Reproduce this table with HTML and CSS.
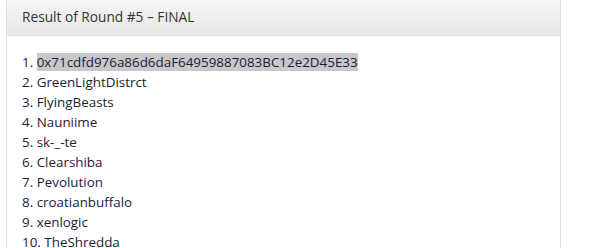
FILE: index.html
```html
<!DOCTYPE html>
<html>
<head>
  <meta charset="utf-8">
  <title>Result of Round #5</title>
  <link rel="stylesheet" href="styles.css">
</head>
<body>
  <div class="panel">
    <div class="panel-heading">Result of Round #5 – FINAL</div>
    <div class="panel-body">
      <div class="row">1. <span class="picked">0x71cdfd976a86d6daF64959887083BC12e2D45E33</span></div>
      <div class="row">2. GreenLightDistrct</div>
      <div class="row">3. FlyingBeasts</div>
      <div class="row">4. Nauniime</div>
      <div class="row">5. sk-_-te</div>
      <div class="row">6. Clearshiba</div>
      <div class="row">7. Pevolution</div>
      <div class="row">8. croatianbuffalo</div>
      <div class="row">9. xenlogic</div>
      <div class="row">10. TheShredda</div>
    </div>
  </div>
</body>
</html>
```

FILE: styles.css
```css
/* base */
html, body {
  margin: 0;
  padding: 0;
  height: 100%;
  overflow: hidden;
  background: #fff;
  font-family: "Open Sans", "DejaVu Sans", sans-serif;
}

.panel {
  width: 553px;
  height: 100%;
  margin-left: 6px;
  border: 1px solid #ddd;
  border-top: none;
}

.panel-heading {
  height: 36px;
  box-sizing: border-box;
  padding: 0 15px;
  line-height: 33px;
  font-size: 13.7px;
  color: #333;
  background: linear-gradient(#f5f5f5, #e8e8e8);
  border-bottom: 1px solid #ddd;
}

.panel-body {
  padding: 16px 15px 0;
  font-size: 13.4px;
  color: #1c1c3a;
}

.row {
  line-height: 20px;
}

.picked {
  background: #c8c8c8;
}
```
